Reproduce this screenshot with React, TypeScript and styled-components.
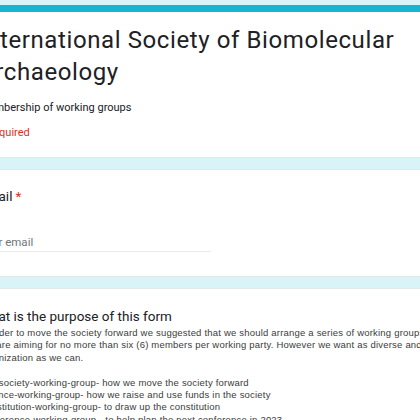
import styled, { createGlobalStyle } from 'styled-components'

const GlobalStyle = createGlobalStyle`
    html, body {
        margin: 0;
        padding: 0;
        background-color: #d8f4f8;
        overflow: hidden;
    }
`

const Page = styled.main`
    display: flex;
    flex-direction: column;
    gap: 11px;
    width: 480px;
    margin-left: -46px;
    padding-top: 5px;
`

const Card = styled.section<{ accent?: boolean }>`
    background-color: #fff;
    border: 1px solid #e2e8ea;
    border-top: ${({ accent }) => accent ? '7px solid #19b4cf' : '1px solid #e2e8ea'};
    border-radius: 8px;
    padding: ${({ accent }) => accent ? '12px 24px 15px' : '16px 24px 24px'};
    color: #202124;
    font-family: Roboto, "Liberation Sans", sans-serif;
`

const Title = styled.h1`
    margin: 0;
    font-size: 24px;
    font-weight: 400;
    line-height: 32px;
    letter-spacing: 0.6px;
    width: 440px;
`

const Description = styled.p`
    margin: 11px 0 0;
    font-size: 11px;
    line-height: 18px;
`

const Required = styled.p`
    margin: 7px 0 0;
    font-size: 11px;
    line-height: 18px;
    color: #d93025;
`

const Question = styled.h2`
    margin: 0;
    font-size: 13.5px;
    font-weight: 400;
    line-height: 20px;

    span {
        color: #d93025;
        margin-left: 3px;
    }
`

const Input = styled.input`
    display: block;
    margin-top: 26px;
    width: 232px;
    height: 19px;
    padding: 0;
    border: none;
    border-bottom: 1px solid #e8eaed;
    font-family: Roboto, "Liberation Sans", sans-serif;
    font-size: 11.5px;
    outline: none;

    &::placeholder {
        color: #70757a;
    }
`

const SectionTitle = styled.h2`
    margin: 0;
    font-size: 13.5px;
    font-weight: 400;
    line-height: 22px;
`

const Body = styled.div`
    font-family: "Liberation Sans", Arial, sans-serif;
    font-size: 9.5px;
    line-height: 12.4px;
    letter-spacing: 0.2px;
    color: #3c3c3c;
    white-space: nowrap;

    p {
        margin: 0;
        min-height: 12.4px;
    }
`

const lines = [
    'In order to move the society forward we suggested that we should arrange a series of working groups.',
    'We are aiming for no more than six (6) members per working party.  However we want as diverse and inclusive a group',
    'organization as we can.',
    '',
    'The society-working-group- how we move the society forward',
    'Finance-working-group- how we raise and use funds in the society',
    'Constitution-working-group- to draw up the constitution',
    'Conference-working-group - to help plan the next conference in 2023',
]

export default function App() {
    return (
        <>
            <GlobalStyle />
            <Page>
                <Card accent>
                    <Title>International Society of Biomolecular Archaeology</Title>
                    <Description>Membership of working groups</Description>
                    <Required>* Required</Required>
                </Card>
                <Card>
                    <Question>Email<span>*</span></Question>
                    <Input placeholder="Your email" />
                </Card>
                <Card>
                    <SectionTitle>What is the purpose of this form</SectionTitle>
                    <Body>
                        {lines.map((line, index) => <p key={`line_${index}`}>{line}</p>)}
                    </Body>
                </Card>
            </Page>
        </>
    )
}
